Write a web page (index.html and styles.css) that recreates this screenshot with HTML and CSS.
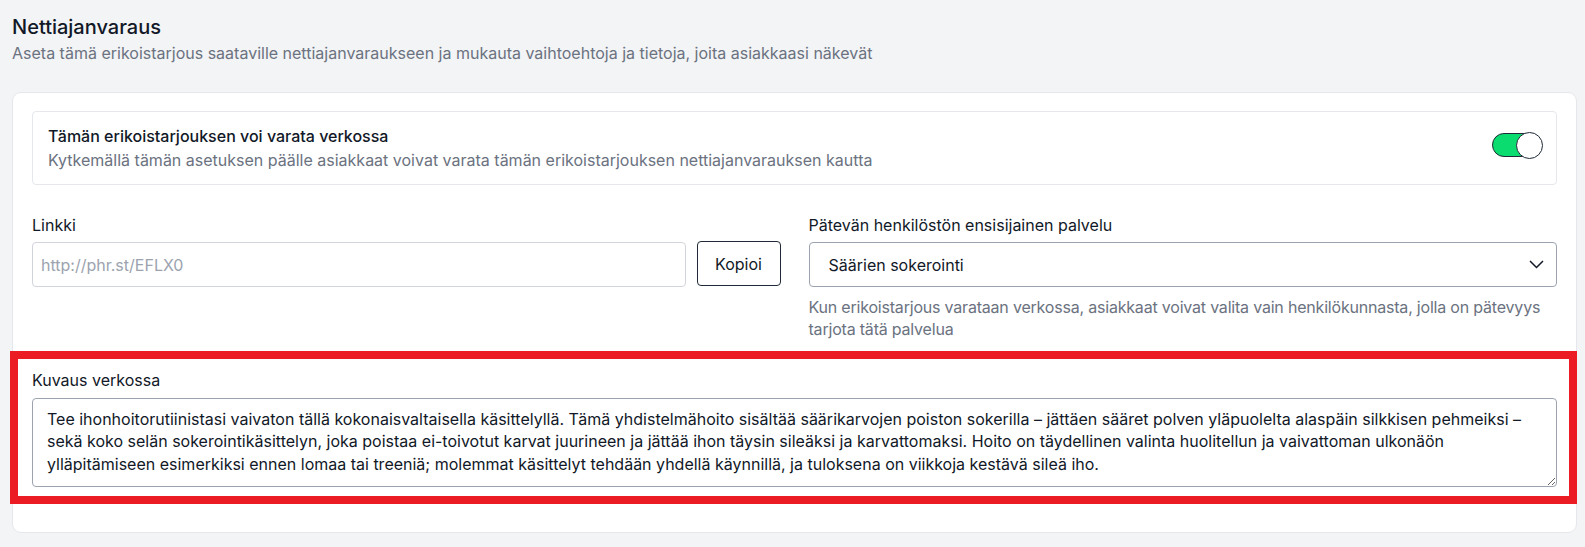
FILE: index.html
```html
<!DOCTYPE html>
<html lang="fi">
<head>
<meta charset="utf-8">
<title>Nettiajanvaraus</title>
<link rel="stylesheet" href="styles.css">
</head>
<body>
<div class="page">
  <h1 class="title">Nettiajanvaraus</h1>
  <p class="subtitle">Aseta tämä erikoistarjous saataville nettiajanvaraukseen ja mukauta vaihtoehtoja ja tietoja, joita asiakkaasi näkevät</p>

  <div class="card">
    <div class="toggle-box">
      <div class="toggle-text">
        <div class="toggle-title">Tämän erikoistarjouksen voi varata verkossa</div>
        <div class="toggle-desc">Kytkemällä tämän asetuksen päälle asiakkaat voivat varata tämän erikoistarjouksen nettiajanvarauksen kautta</div>
      </div>
      <div class="switch"><span class="knob"></span></div>
    </div>

    <div class="fields">
      <div class="field">
        <label class="label">Linkki</label>
        <div class="link-row">
          <input class="input" type="text" placeholder="http://phr.st/EFLX0">
          <button class="btn">Kopioi</button>
        </div>
      </div>
      <div class="field">
        <label class="label">Pätevän henkilöstön ensisijainen palvelu</label>
        <div class="select">
          <span>Säärien sokerointi</span>
          <svg class="chev" width="15" height="9" viewBox="0 0 15 9"><path d="M1 1l6.5 6.5L14 1" fill="none" stroke="#111827" stroke-width="1.5"/></svg>
        </div>
        <p class="help">Kun erikoistarjous varataan verkossa, asiakkaat voivat valita vain henkilökunnasta, jolla on pätevyys tarjota tätä palvelua</p>
      </div>
    </div>

    <div class="desc-section">
      <label class="label label-desc">Kuvaus verkossa</label>
      <textarea class="textarea">Tee ihonhoitorutiinistasi vaivaton tällä kokonaisvaltaisella käsittelyllä. Tämä yhdistelmähoito sisältää säärikarvojen poiston sokerilla – jättäen sääret polven yläpuolelta alaspäin silkkisen pehmeiksi – sekä koko selän sokerointikäsittelyn, joka poistaa ei-toivotut karvat juurineen ja jättää ihon täysin sileäksi ja karvattomaksi. Hoito on täydellinen valinta huolitellun ja vaivattoman ulkonäön ylläpitämiseen esimerkiksi ennen lomaa tai treeniä; molemmat käsittelyt tehdään yhdellä käynnillä, ja tuloksena on viikkoja kestävä sileä iho.</textarea>
    </div>
  </div>
</div>
</body>
</html>
```

FILE: styles.css
```css
* { box-sizing: border-box; }
html, body { margin: 0; padding: 0; }
body {
  background: #f3f4f6;
  font-family: Inter, "Noto Sans", "Liberation Sans", sans-serif;
  color: #111827;
}
.page {
  padding: 13px 8px 15px 12px;
}
.title {
  margin: 0;
  font-size: 20px;
  line-height: 28px;
  font-weight: 500;
  color: #111827;
}
.subtitle {
  margin: 0;
  font-size: 16px;
  line-height: 24px;
  color: #6b7280;
}
.card {
  margin-top: 27px;
  background: #fff;
  border: 1px solid #e5e7eb;
  border-radius: 9px;
  padding: 18px 19px 45px;
}
.toggle-box {
  display: flex;
  align-items: center;
  justify-content: space-between;
  border: 1px solid #e5e7eb;
  border-radius: 4px;
  padding: 12px 14px 12px 15px;
}
.toggle-title {
  font-size: 16px;
  line-height: 24px;
  font-weight: 500;
  color: #111827;
}
.toggle-desc {
  font-size: 16px;
  line-height: 24px;
  color: #6b7280;
}
.switch {
  position: relative;
  width: 50px;
  height: 24px;
  margin: -3px 0 3px;
  background: #0bdc6f;
  border: 1px solid #1f2937;
  border-radius: 12px;
  flex: none;
}
.knob {
  position: absolute;
  right: -2px;
  top: -2px;
  width: 27px;
  height: 27px;
  border-radius: 50%;
  background: #fff;
  border: 1px solid #1f2937;
}
.fields {
  display: grid;
  grid-template-columns: 1fr 1fr;
  column-gap: 28px;
  margin-top: 28px;
}
.label {
  display: block;
  font-size: 16px;
  line-height: 24px;
  font-weight: 400;
  color: #111827;
  margin-bottom: 5px;
}
.label-desc { margin-bottom: 6px; }
.link-row {
  display: flex;
  gap: 11px;
}
.input {
  flex: 1;
  min-width: 0;
  height: 45px;
  border: 1px solid #d1d5db;
  border-radius: 4px;
  padding: 0 8px;
  font-family: inherit;
  font-size: 16px;
  color: #111827;
  background: #fff;
}
.input::placeholder { color: #9ca3af; }
.btn {
  width: 84px;
  height: 45px;
  border: 1px solid #1f2937;
  border-radius: 4px;
  background: #fff;
  font-family: inherit;
  font-size: 16px;
  color: #111827;
  margin-top: -1px;
}
.select {
  display: flex;
  align-items: center;
  justify-content: space-between;
  height: 45px;
  border: 1px solid #9ca3af;
  border-radius: 4px;
  padding: 0 12px 0 19px;
  font-size: 16px;
  color: #111827;
}
.help {
  margin: 9px 0 0;
  font-size: 16px;
  line-height: 22px;
  letter-spacing: -0.2px;
  color: #6b7280;
}
.desc-section {
  position: relative;
  margin-top: 28px;
}
.desc-section::after {
  content: "";
  position: absolute;
  left: -22px;
  right: -20px;
  top: -17px;
  bottom: -17px;
  border: 8px solid #ec1c24;
  pointer-events: none;
}
.textarea {
  display: block;
  width: 100%;
  height: 89px;
  border: 1px solid #9ca3af;
  border-radius: 4px;
  padding: 9px 14px;
  font-family: inherit;
  font-size: 16px;
  line-height: 22.4px;
  color: #111827;
  resize: vertical;
  background: #fff;
}
```
